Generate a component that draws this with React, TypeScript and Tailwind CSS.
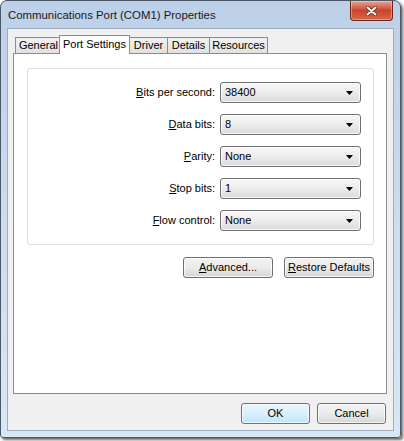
import React from "react";

const rows = [
  { key: "B", rest: "its per second:", value: "38400" },
  { key: "D", rest: "ata bits:", value: "8" },
  { key: "P", rest: "arity:", value: "None" },
  { key: "S", rest: "top bits:", value: "1" },
  { key: "F", rest: "low control:", value: "None" },
];

const tabs = [
  { label: "General", w: "w-[47px]" },
  { label: "Port Settings", w: "w-[71px]", active: true },
  { label: "Driver", w: "w-[39px]" },
  { label: "Details", w: "w-[43px]" },
  { label: "Resources", w: "w-[59px]" },
];

function Combo({ value }: { value: string }) {
  return (
    <div className="flex h-[21px] w-[141px] items-center justify-between rounded-[3px] border border-[#707070] bg-gradient-to-b from-[#f7f7f7] via-[#ececec] to-[#dcdcdc] pl-[4px] pr-[7px] shadow-[inset_0_0_0_1px_rgba(255,255,255,0.8)]">
      <span>{value}</span>
      <svg width="7" height="4" viewBox="0 0 7 4" className="mt-px">
        <path d="M0 0h7L3.5 4z" fill="#000" />
      </svg>
    </div>
  );
}

function Button({ children, w, primary }: { children: React.ReactNode; w: string; primary?: boolean }) {
  return (
    <div
      className={`flex h-[21px] ${w} items-center justify-center rounded-[3px] border shadow-[inset_0_0_0_1px_rgba(255,255,255,0.75)] ${
        primary
          ? "border-[#3c7fb1] bg-gradient-to-b from-[#eaf6fd] via-[#d9f0fc] to-[#bee6fd]"
          : "border-[#707070] bg-gradient-to-b from-[#f2f2f2] via-[#ebebeb] to-[#d6d6d6]"
      }`}
    >
      {children}
    </div>
  );
}

export default function App() {
  return (
    <div className="h-[441px] w-[404px] bg-white font-['Liberation_Sans',Arial,sans-serif] text-[11px] text-black">
      <div className="flex h-[438px] w-[401px] flex-col rounded-t-[7px] rounded-b-[3px] border border-[#4a5868] bg-gradient-to-b from-[#bcd0e8] via-[#cddcee] to-[#d9e6f4] shadow-[2px_2px_3px_rgba(0,0,0,0.6)]">
        {/* title bar */}
        <div className="flex h-[27px] items-start justify-between pl-[7px] pr-[7px]">
          <span className="mt-[6px] text-[11.4px] text-[#1a1a1a]">Communications Port (COM1) Properties</span>
          <div className="flex h-[20px] w-[43px] items-center justify-center rounded-b-[4px] border border-t-0 border-[#6b2418] bg-gradient-to-b from-[#e4a494] via-[#c9452c] to-[#d9654a] shadow-[inset_0_0_0_1px_rgba(255,255,255,0.35)]">
            <svg width="11" height="10" viewBox="0 0 11 10">
              <path d="M1.5 1.5l8 7M9.5 1.5l-8 7" stroke="#5a1a10" strokeWidth="3.4" strokeLinecap="round" />
              <path d="M1.5 1.5l8 7M9.5 1.5l-8 7" stroke="#fff" strokeWidth="2" strokeLinecap="round" />
            </svg>
          </div>
        </div>

        {/* client */}
        <div className="mx-[6px] mb-[6px] flex flex-1 flex-col border border-[#9fadbe] bg-[#f0f0f0] pl-[5px] pr-[6px] pt-[6px]">
          {/* tabs */}
          <div className="flex h-[18px] items-end pl-[2px]">
            {tabs.map((t) => (
              <div
                key={t.label}
                className={`-mr-px flex ${t.w} items-center justify-center border border-b-0 ${
                  t.active
                    ? "relative z-10 -mx-[2px] -mb-px h-[19px] border-[#898c95] bg-white pb-[2px]"
                    : "h-[16px] border-[#898c95] bg-gradient-to-b from-[#f2f2f2] to-[#e1e1e1]"
                }`}
              >
                {t.label}
              </div>
            ))}
          </div>

          {/* panel */}
          <div className="flex flex-1 flex-col border border-[#898c95] bg-white pl-[13px] pr-[12px] pt-[14px]">
            <div className="flex flex-col gap-[11px] rounded-[3px] border border-[#d5dfe5] pb-[13px] pr-[12px] pt-[13px]">
              {rows.map((r) => (
                <div key={r.key} className="flex items-center justify-end gap-[5px]">
                  <span>
                    <span className="underline underline-offset-1">{r.key}</span>
                    {r.rest}
                  </span>
                  <Combo value={r.value} />
                </div>
              ))}
            </div>
            <div className="mt-[12px] flex justify-end gap-[11px]">
              <Button w="w-[90px]">
                <span>
                  <span className="underline underline-offset-1">A</span>dvanced...
                </span>
              </Button>
              <Button w="w-[90px]">
                <span>
                  <span className="underline underline-offset-1">R</span>estore Defaults
                </span>
              </Button>
            </div>
          </div>

          {/* dialog buttons */}
          <div className="flex h-[36px] items-start justify-end gap-[7px] pr-[1px] pt-[9px]">
            <Button w="w-[69px]" primary>
              OK
            </Button>
            <Button w="w-[69px]">Cancel</Button>
          </div>
        </div>
      </div>
    </div>
  );
}
